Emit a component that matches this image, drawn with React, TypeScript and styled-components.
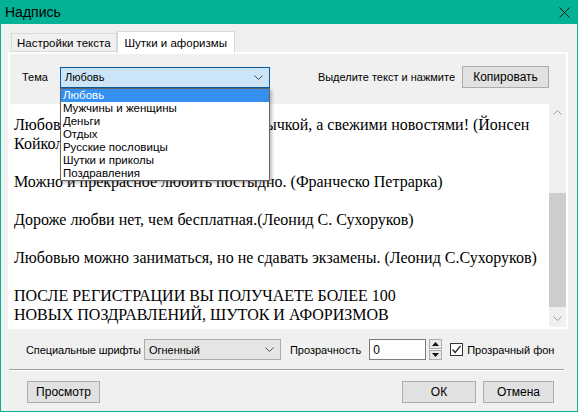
import styled, { createGlobalStyle } from "styled-components";

const GlobalStyle = createGlobalStyle`
  html, body {
    margin: 0;
    padding: 0;
    background: #f0f0f0;
  }
`

const TEAL = "#03b295"

const topics = [
    "Любовь",
    "Мужчины и женщины",
    "Деньги",
    "Отдых",
    "Русские пословицы",
    "Шутки и приколы",
    "Поздравления",
]

const lines = [
    "Любовь должна быть не старой привычкой, а свежими новостями! (Йонсен",
    "Койколайнен)",
    "",
    "Можно и прекрасное любить постыдно. (Франческо Петрарка)",
    "",
    "Дороже любви нет, чем бесплатная.(Леонид С. Сухоруков)",
    "",
    "Любовью можно заниматься, но не сдавать экзамены. (Леонид С.Сухоруков)",
    "",
    "ПОСЛЕ РЕГИСТРАЦИИ ВЫ ПОЛУЧАЕТЕ БОЛЕЕ 100",
    "НОВЫХ ПОЗДРАВЛЕНИЙ, ШУТОК И АФОРИЗМОВ",
]

const Chevron = ({ up = false, color = "#333" }: { up?: boolean; color?: string }) => (
    <svg width="9" height="5" viewBox="0 0 9 5">
        <path
            d={up ? "M0.5 4.5 L4.5 0.5 L8.5 4.5" : "M0.5 0.5 L4.5 4.5 L8.5 0.5"}
            fill="none"
            stroke={color}
            strokeWidth="1"
        />
    </svg>
)

export default function App() {
    return (
        <>
            <GlobalStyle/>
            <Window>
                <TitleBar>
                    <Title>Надпись</Title>
                    <CloseIcon width="11" height="11" viewBox="0 0 11 11">
                        <path d="M0.5 0.5 L10.5 10.5 M10.5 0.5 L0.5 10.5" stroke="#111" strokeWidth="1"/>
                    </CloseIcon>
                </TitleBar>
                <Body>
                    <TabStrip>
                        <Tab>Настройки текста</Tab>
                        <Tab $active>Шутки и афоризмы</Tab>
                    </TabStrip>
                    <Panel>
                        <TopRow>
                            <Label>Тема</Label>
                            <ComboWrap>
                                <Combo $focused $width={210}>
                                    <span>Любовь</span>
                                    <Chevron color="#444"/>
                                </Combo>
                                <DropList>
                                    {topics.map((t, i) => (
                                        <DropItem key={t} $selected={i === 0}>{t}</DropItem>
                                    ))}
                                </DropList>
                            </ComboWrap>
                            <Hint>Выделите текст и нажмите</Hint>
                            <Button $w={87}>Копировать</Button>
                        </TopRow>
                        <Editor>
                            <EditorText>
                                {lines.map((l, i) => (
                                    <Line key={i}>{l || "\u00a0"}</Line>
                                ))}
                            </EditorText>
                            <Scrollbar>
                                <ScrollArrow><Chevron up color="#9a9a9a"/></ScrollArrow>
                                <ScrollTrack>
                                    <ScrollThumb/>
                                </ScrollTrack>
                                <ScrollArrow><Chevron color="#9a9a9a"/></ScrollArrow>
                            </Scrollbar>
                        </Editor>
                    </Panel>
                    <ControlsRow>
                        <FontLabel>Специальные шрифты</FontLabel>
                        <Combo $width={137}>
                            <span>Огненный</span>
                            <Chevron color="#555"/>
                        </Combo>
                        <Label>Прозрачность</Label>
                        <SpinInput>0</SpinInput>
                        <SpinButtons>
                            <SpinBtn>
                                <svg width="7" height="4" viewBox="0 0 7 4"><path d="M0 4 L3.5 0 L7 4 Z" fill="#111"/></svg>
                            </SpinBtn>
                            <SpinBtn>
                                <svg width="7" height="4" viewBox="0 0 7 4"><path d="M0 0 L3.5 4 L7 0 Z" fill="#111"/></svg>
                            </SpinBtn>
                        </SpinButtons>
                        <CheckLabel>
                            <CheckBox>
                                <svg width="11" height="11" viewBox="0 0 11 11">
                                    <path d="M1.5 5.5 L4.2 8.5 L9.5 1.8" fill="none" stroke="#222" strokeWidth="1.3"/>
                                </svg>
                            </CheckBox>
                            Прозрачный фон
                        </CheckLabel>
                    </ControlsRow>
                    <Separator/>
                    <ButtonRow>
                        <Button $w={73}>Просмотр</Button>
                        <Spacer/>
                        <Button $w={74}>ОК</Button>
                        <Button $w={71}>Отмена</Button>
                    </ButtonRow>
                </Body>
            </Window>
        </>
    )
}

const Window = styled.div`
  width: 578px;
  height: 412px;
  box-sizing: border-box;
  border: 1px solid ${TEAL};
  border-top: 0;
  display: flex;
  flex-direction: column;
  background: #f0f0f0;
  font-family: "Liberation Sans", Arial, sans-serif;
  font-size: 11px;
  color: #000;
  overflow: hidden;
`

const TitleBar = styled.div`
  height: 24px;
  background: ${TEAL};
  display: flex;
  align-items: center;
  justify-content: space-between;
  padding: 0 7px 0 4px;
  flex-shrink: 0;
`

const Title = styled.span`
  font-size: 14px;
  color: #000;
`

const CloseIcon = styled.svg`
  display: block;
`

const Body = styled.div`
  flex: 1;
  display: flex;
  flex-direction: column;
  padding: 7px 9px 0 7px;
`

const TabStrip = styled.div`
  display: flex;
  align-items: flex-end;
  height: 21px;
  padding-left: 3px;
`

const Tab = styled.div<{ $active?: boolean }>`
  height: ${p => (p.$active ? "22px" : "19px")};
  box-sizing: border-box;
  padding: 0 ${p => (p.$active ? "7px" : "5px")};
  display: flex;
  align-items: center;
  border: 1px solid #d9d9d9;
  border-bottom: ${p => (p.$active ? "0" : "1px solid #d9d9d9")};
  background: ${p => (p.$active ? "#ffffff" : "#f0f0f0")};
  margin-bottom: ${p => (p.$active ? "-1px" : "0")};
  position: relative;
  z-index: ${p => (p.$active ? 2 : 1)};
  font-size: 11.5px;
`

const Panel = styled.div`
  border: 2px solid #ffffff;
  display: flex;
  flex-direction: column;
  position: relative;
`

const TopRow = styled.div`
  display: flex;
  align-items: center;
  height: 22px;
  margin: 12px 0 0 12px;
`

const Label = styled.span`
  white-space: nowrap;
`

const FontLabel = styled(Label)`
  margin-right: 3px;
  letter-spacing: -0.1px;
`

const ComboWrap = styled.div`
  position: relative;
  margin-left: 12px;
  z-index: 5;
`

const Combo = styled.div<{ $focused?: boolean; $width: number }>`
  width: ${p => p.$width}px;
  height: 21px;
  box-sizing: border-box;
  display: flex;
  align-items: center;
  justify-content: space-between;
  padding: 0 6px 0 4px;
  background: ${p => (p.$focused ? "#cce4f7" : "#e5e5e5")};
  border: 1px solid ${p => (p.$focused ? "#0a5aa0" : "#acacac")};

  svg {
    display: block;
  }
`

const DropList = styled.div`
  position: absolute;
  top: 100%;
  left: 0;
  width: 210px;
  box-sizing: border-box;
  border: 1px solid #646464;
  background: #fff;
  box-shadow: 2px 2px 3px rgba(0, 0, 0, 0.25);
`

const DropItem = styled.div<{ $selected?: boolean }>`
  height: 13px;
  line-height: 13px;
  padding-left: 2px;
  font-size: 11.5px;
  background: ${p => (p.$selected ? "#3390f0" : "transparent")};
  color: ${p => (p.$selected ? "#fff" : "#000")};
  white-space: nowrap;
`

const Hint = styled.span`
  margin-left: auto;
  margin-right: 7px;
  white-space: nowrap;
`

const Button = styled.div<{ $w: number }>`
  width: ${p => p.$w}px;
  height: 22px;
  box-sizing: border-box;
  border: 1px solid #adadad;
  background: #e1e1e1;
  display: flex;
  align-items: center;
  justify-content: center;
  font-size: 12px;
  margin-right: 17px;
`

const Editor = styled.div`
  margin-top: 16px;
  height: 223px;
  display: flex;
  background: #fff;
`

const EditorText = styled.div`
  flex: 1;
  padding: 11px 0 0 4px;
  font-family: "Liberation Serif", "Times New Roman", serif;
  font-size: 16px;
  line-height: 19px;
  overflow: hidden;
`

const Line = styled.div`
  white-space: pre;
`

const Scrollbar = styled.div`
  width: 17px;
  background: #f0f0f0;
  display: flex;
  flex-direction: column;
`

const ScrollArrow = styled.div`
  height: 17px;
  display: flex;
  align-items: center;
  justify-content: center;
`

const ScrollTrack = styled.div`
  flex: 1;
  display: flex;
  flex-direction: column;
  justify-content: flex-end;
`

const ScrollThumb = styled.div`
  height: 114px;
  background: #cdcdcd;
  margin-bottom: 3px;
`

const ControlsRow = styled.div`
  display: flex;
  align-items: center;
  margin-top: 10px;
  height: 21px;
  padding-left: 18px;

  & > ${Combo} {
    margin-right: 9px;
  }
`

const SpinInput = styled.div`
  width: 57px;
  height: 21px;
  box-sizing: border-box;
  margin-left: 8px;
  border: 1px solid #7a7a7a;
  background: #fff;
  padding-left: 3px;
  display: flex;
  align-items: center;
  font-size: 12px;
`

const SpinButtons = styled.div`
  display: flex;
  flex-direction: column;
  gap: 1px;
  margin-left: 3px;
`

const SpinBtn = styled.div`
  width: 13px;
  height: 10px;
  box-sizing: border-box;
  border: 1px solid #adadad;
  background: #e8e8e8;
  display: flex;
  align-items: center;
  justify-content: center;

  svg {
    display: block;
  }
`

const CheckLabel = styled.div`
  display: flex;
  align-items: center;
  gap: 4px;
  margin-left: 8px;
  white-space: nowrap;
`

const CheckBox = styled.div`
  width: 13px;
  height: 13px;
  box-sizing: border-box;
  border: 1px solid #333;
  background: #fff;
  display: flex;
  align-items: center;
  justify-content: center;

  svg {
    display: block;
  }
`

const Separator = styled.div`
  margin-top: 9px;
  height: 1px;
  background: #a0a0a0;
  border-bottom: 1px solid #ffffff;
  margin-right: 4px;
  margin-left: 1px;
`

const ButtonRow = styled.div`
  display: flex;
  align-items: center;
  margin-top: 10px;
  padding-left: 19px;

  & > ${Button} {
    margin-right: 0;
  }
  & > ${Button}:last-child {
    margin-left: 7px;
    margin-right: 14px;
  }
`

const Spacer = styled.div`
  flex: 1;
`
